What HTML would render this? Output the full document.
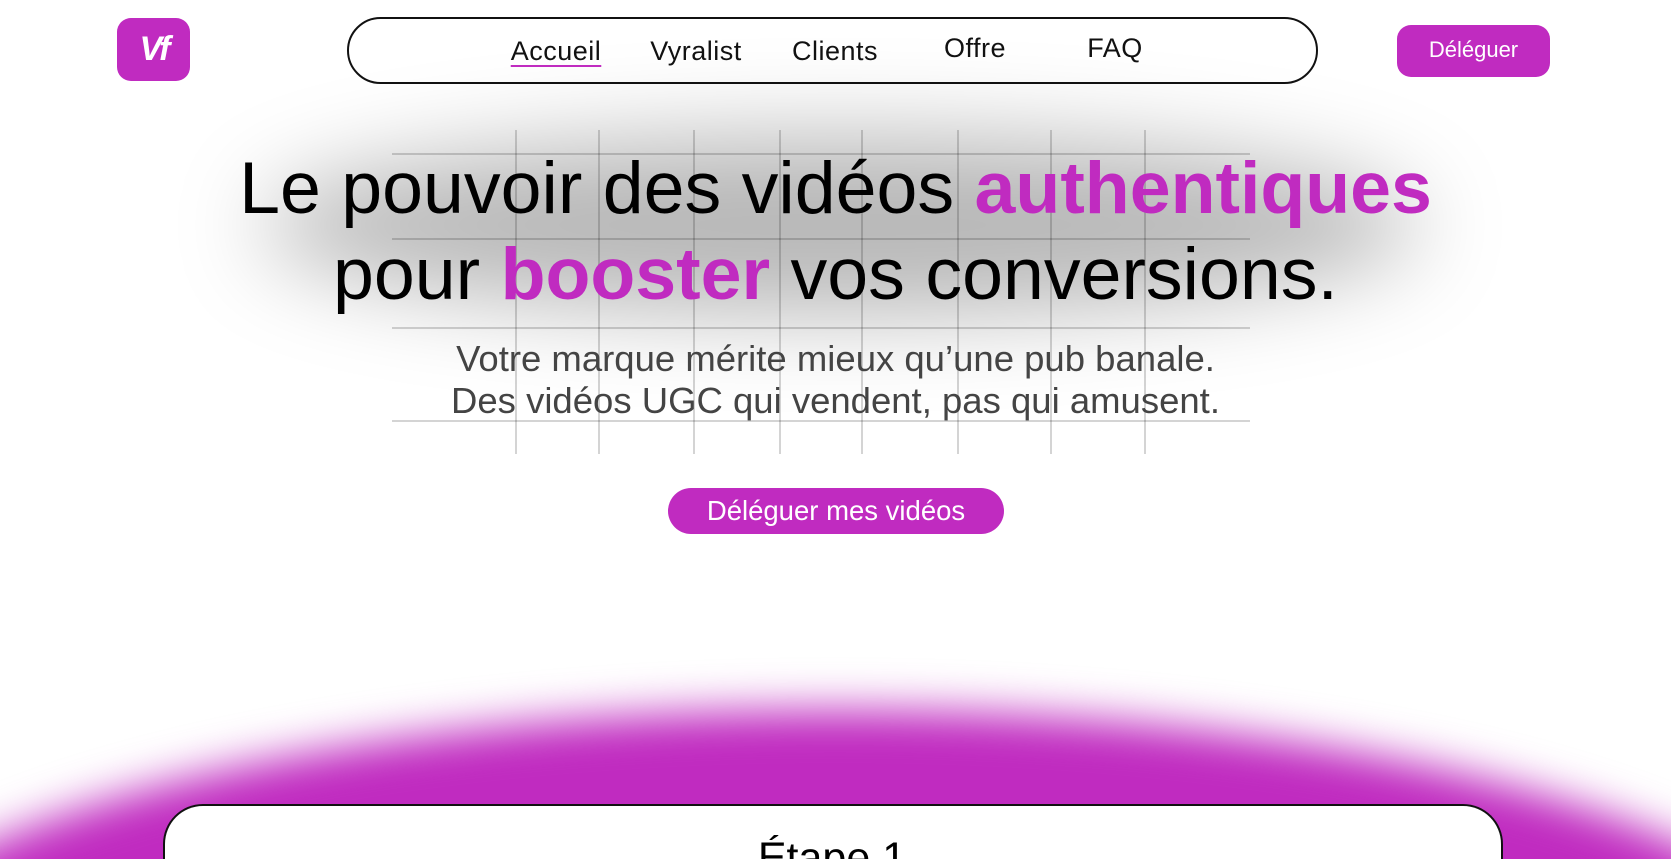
<!DOCTYPE html>
<html><head><meta charset="utf-8"><style>
*{margin:0;padding:0;box-sizing:border-box}
html,body{width:1671px;height:859px;overflow:hidden;background:#fff;font-family:"Liberation Sans",sans-serif;position:relative}
.abs{position:absolute}
.logo{left:117px;top:18px;width:73px;height:63px;background:#c02bc0;border-radius:14px;color:#fff;font:italic bold 34px "Liberation Sans",sans-serif;text-align:center;line-height:63px;letter-spacing:-3px}
.nav{left:347px;top:17px;width:971px;height:67px;border:2px solid #111;border-radius:34px}
.nav span{position:absolute;top:17px;font-size:27px;color:#111;transform:translateX(-50%);letter-spacing:0.5px}
.btn1{left:1397px;top:25px;width:153px;height:52px;background:#c02bc0;border-radius:14px;color:#fff;font-size:22px;text-align:center;line-height:50px}
.shadow{left:260px;top:135px;width:1160px;height:180px;background:rgba(0,0,0,.28);filter:blur(45px);border-radius:50%}
.h{left:0;width:1671px;text-align:center;font-size:73.5px;color:#000;line-height:86px}
.h b{color:#c02bc0}
.sub{left:0;width:1671px;text-align:center;font-size:36.5px;color:#444;line-height:42px}
.hl{left:392px;width:858px;height:2px;background:rgba(0,0,0,.17)}
.vl{top:130px;width:2px;height:324px;background:rgba(0,0,0,.17)}
.cta{left:668px;top:488px;width:336px;height:46px;background:#c02bc0;border-radius:23px;color:#fff;font-size:27.5px;text-align:center;line-height:46px}
.blob{left:-180px;top:710px;width:2030px;height:600px;background:#c02bc0;border-radius:50%;filter:blur(22px)}
.card{left:163px;top:804px;width:1340px;height:55px;background:#fff;border:2px solid #111;border-bottom:none;border-radius:40px 40px 0 0;overflow:hidden}
.card div{text-align:center;font-size:43px;color:#000;margin-top:28px;margin-left:-2px}
</style></head><body>
<div class="abs shadow"></div>
<div class="abs logo">Vf</div>
<div class="abs nav">
<span style="left:207px;text-decoration:underline;text-decoration-color:#c02bc0;text-underline-offset:5px">Accueil</span>
<span style="left:347px">Vyralist</span>
<span style="left:486px">Clients</span>
<span style="left:626px;top:14px">Offre</span>
<span style="left:766px;top:14px">FAQ</span>
</div>
<div class="abs btn1">Déléguer</div>
<div class="abs hl" style="top:153px"></div>
<div class="abs hl" style="top:238px"></div>
<div class="abs hl" style="top:327px"></div>
<div class="abs hl" style="top:420px"></div>
<div class="abs vl" style="left:515px"></div>
<div class="abs vl" style="left:598px"></div>
<div class="abs vl" style="left:693px"></div>
<div class="abs vl" style="left:779px"></div>
<div class="abs vl" style="left:861px"></div>
<div class="abs vl" style="left:957px"></div>
<div class="abs vl" style="left:1050px"></div>
<div class="abs vl" style="left:1144px"></div>
<div class="abs h" style="top:145px">Le pouvoir des vidéos <b>authentiques</b><br>pour <b>booster</b> vos conversions.</div>
<div class="abs sub" style="top:338px">Votre marque mérite mieux qu’une pub banale.<br>Des vidéos UGC qui vendent, pas qui amusent.</div>
<div class="abs cta">Déléguer mes vidéos</div>
<div class="abs blob"></div>
<div class="abs card"><div>Étape 1</div></div>
</body></html>
